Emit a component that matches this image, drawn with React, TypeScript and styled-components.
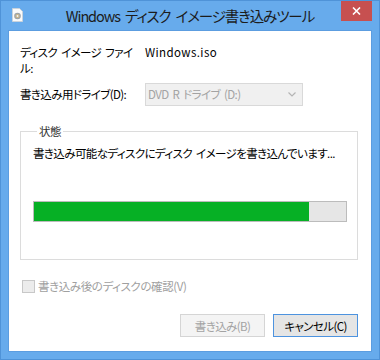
import React from 'react';
import styled, { createGlobalStyle } from 'styled-components';

const GlobalStyle = createGlobalStyle`
    html, body {
        margin: 0;
        padding: 0;
        background: #ffffff;
    }
    body {
        font-family: "Noto Sans CJK JP", "Noto Sans", sans-serif;
        font-feature-settings: "palt";
        font-size: 11.5px;
        letter-spacing: -0.6px;
        word-spacing: 2px;
        color: #000;
    }
`;

const Window = styled.div`
    width: 380px;
    height: 360px;
    box-sizing: border-box;
    display: flex;
    flex-direction: column;
    background: #67abec;
    border: 1px solid #4f93d8;
    padding: 0 7px 7px 7px;
`;

const TitleBar = styled.div`
    height: 29px;
    display: grid;
    grid-template-columns: 1fr auto 1fr;
    align-items: start;
`;

const AppIcon = styled.svg`
    margin: 7px 0 0 4px;
`;

const Title = styled.div`
    font-size: 14.5px;
    line-height: 20px;
    margin-top: 5px;
    color: #1c1c1c;
    letter-spacing: -1.1px;
    word-spacing: 3px;
    white-space: nowrap;
`;

const CloseButton = styled.div`
    justify-self: end;
    width: 31px;
    height: 20px;
    background: #c75050;
    display: flex;
    align-items: center;
    justify-content: center;
`;

const Client = styled.div`
    flex: 1;
    background: #ffffff;
    border: 1px solid #5c9de0;
    display: flex;
    flex-direction: column;
    padding: 0 13px 0 11px;
`;

const Row = styled.div<{ $top: number }>`
    display: flex;
    align-items: center;
    margin-top: ${p => p.$top}px;
    line-height: 15px;
    white-space: nowrap;
`;

const FileRow = styled(Row)`
    align-items: flex-start;
    line-height: 16px;
`;

const Label = styled.div`
    width: 125px;
    flex-shrink: 0;
`;

const Value = styled.div`
    letter-spacing: 0.4px;
`;

const Select = styled.div`
    width: 158px;
    height: 23px;
    box-sizing: border-box;
    background: #f0f0f0;
    border: 1px solid #d9d9d9;
    color: #a3a3a3;
    display: flex;
    align-items: center;
    justify-content: space-between;
    padding: 0 6px 0 2px;
`;

const Group = styled.fieldset`
    margin: 18px 0 0 0;
    border: 1px solid #dcdcdc;
    padding: 8px 10px 37px 12px;
    min-width: 0;
`;

const Legend = styled.legend`
    padding: 0 2px;
    margin-left: 4px;
    line-height: 14px;
    color: #333;
`;

const Status = styled.div`
    line-height: 15px;
    white-space: nowrap;
`;

const Progress = styled.div`
    margin-top: 40px;
    height: 21px;
    box-sizing: border-box;
    border: 1px solid #bcbcbc;
    background: #e6e6e6;
`;

const ProgressFill = styled.div`
    height: 100%;
    background: #06b025;
`;

const CheckRow = styled(Row)`
    margin-left: 2px;
    color: #a0a0a0;
    gap: 3px;
    letter-spacing: -0.4px;
`;

const CheckBox = styled.span`
    width: 13px;
    height: 13px;
    box-sizing: border-box;
    border: 1px solid #c8c8c8;
    background: #ececec;
`;

const ButtonBar = styled.div`
    display: flex;
    justify-content: flex-end;
    gap: 8px;
    margin-top: 20px;
`;

const Button = styled.div<{ $disabled?: boolean; $default?: boolean }>`
    width: 85px;
    height: 23px;
    box-sizing: border-box;
    display: flex;
    align-items: center;
    justify-content: center;
    border: 1px solid ${p => (p.$default ? '#4d93df' : '#d5d5d5')};
    background: ${p => (p.$disabled ? '#f4f4f4' : '#e5e5e5')};
    color: ${p => (p.$disabled ? '#a3a3a3' : '#000')};
`;

export default function App(): JSX.Element {
    const progress = 88;

    return (
        <>
            <GlobalStyle />
            <Window>
                <TitleBar>
                    <AppIcon width="11" height="14" viewBox="0 0 11 14">
                        <path d="M0.5 0.5 H7.5 L10.5 3.5 V13.5 H0.5 Z" fill="#fafafa" stroke="#c9d3dc" />
                        <circle cx="5.5" cy="8" r="3.3" fill="#9aa3ab" />
                        <circle cx="5.5" cy="8" r="2.2" fill="#c7b58d" />
                        <circle cx="5.5" cy="8" r="0.9" fill="#f4f4f4" />
                    </AppIcon>
                    <Title>Windows ディスク イメージ書き込みツール</Title>
                    <CloseButton>
                        <svg width="9" height="8" viewBox="0 0 9 8">
                            <path d="M1 0.5 L8 7.5 M8 0.5 L1 7.5" stroke="#ffffff" strokeWidth="1.6" />
                        </svg>
                    </CloseButton>
                </TitleBar>
                <Client>
                    <FileRow $top={13}>
                        <Label>
                            ディスク イメージ ファイ
                            <br />
                            ル:
                        </Label>
                        <Value>Windows.iso</Value>
                    </FileRow>
                    <Row $top={7}>
                        <Label>書き込み用ドライブ(D):</Label>
                        <Select>
                            <span>DVD R ドライブ (D:)</span>
                            <svg width="8" height="5" viewBox="0 0 8 5">
                                <path d="M0.5 0.5 L4 4 L7.5 0.5" fill="none" stroke="#b4b4b4" strokeWidth="1.2" />
                            </svg>
                        </Select>
                    </Row>
                    <Group>
                        <Legend>状態</Legend>
                        <Status>書き込み可能なディスクにディスク イメージを書き込んでいます...</Status>
                        <Progress>
                            <ProgressFill style={{ width: `${progress}%` }} />
                        </Progress>
                    </Group>
                    <CheckRow $top={19}>
                        <CheckBox />
                        <span>書き込み後のディスクの確認(V)</span>
                    </CheckRow>
                    <ButtonBar>
                        <Button $disabled>書き込み(B)</Button>
                        <Button $default>キャンセル(C)</Button>
                    </ButtonBar>
                </Client>
            </Window>
        </>
    );
}
